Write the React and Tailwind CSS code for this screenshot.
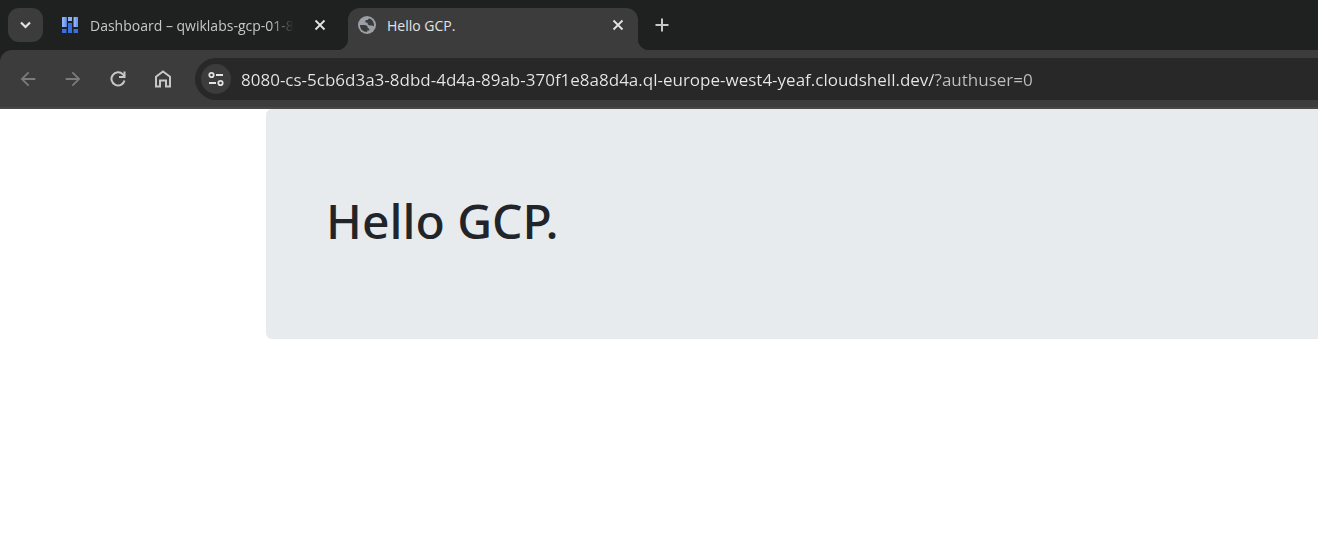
import { MdArrowBack, MdArrowForward } from "react-icons/md";

function ChevronIcon() {
  return (
    <svg className="size-[18px]" viewBox="0 0 18 18" fill="none" stroke="#e3e3e3" strokeWidth="2.2">
      <path d="M4 6.5 8.500 11 13 6.500" />
    </svg>
  );
}

function DashboardIcon() {
  return (
    <svg className="size-4 shrink-0" viewBox="0 0 16 16">
      <path fill="#8ab0f8" d="M0 0h4.500v10H0zM6 0h4v4H6zM11.500 0H16v10h-4.500z" />
      <path fill="#6d9af5" d="M2.500 0h2v10h-2zM14 0h2v10h-2z" />
      <path fill="#3a6fe0" d="M0 12h4.500v4H0zM6 6h4v10H6zM11.500 12H16v4h-4.500z" />
    </svg>
  );
}

function GlobeIcon() {
  return (
    <svg className="size-[18px] shrink-0" viewBox="0 0 18 18">
      <circle cx="9" cy="9" r="9" fill="#9aa0a6" />
      <path
        fill="#3c3c3c"
        d="M2 9h4.200c2.300 0 3.500 1 3.500 2.600 0 .6.400.8 1 .8h.6v1.500c0 .4-.3.7-.7.700H9.200v1.400C5 16.100 2 13.200 2 9zM11.600 2.400C14.300 3.500 16 6 16 9c0 .5-.1 1-.2 1.400-.6-.5-1.400-.8-2.300-.8-2.400 0-3.900-.8-3.900-2.400 0-.6-.4-.8-1-.8H7.400V5.200c0-.7.5-1.200 1.200-1.200h1.200c.2-.9.800-1.400 1.800-1.600z"
      />
    </svg>
  );
}

function CloseIcon() {
  return (
    <svg className="size-3" viewBox="0 0 12 12" fill="none" stroke="#e3e3e3" strokeWidth="1.800">
      <path d="m1.500 1.500 9 9M10.500 1.500l-9 9" />
    </svg>
  );
}

function PlusIcon() {
  return (
    <svg className="size-[14px]" viewBox="0 0 14 14" fill="none" stroke="#c7c7c7" strokeWidth="2">
      <path d="M7 .5v13M.5 7h13" />
    </svg>
  );
}

function ReloadIcon() {
  return (
    <svg className="size-4" viewBox="0 0 16 16" fill="none" stroke="#c7c7c7" strokeWidth="2">
      <path d="M14.500 9.500A6.600 6.600 0 1 1 12.900 3.400L14.700 5.200" />
      <path d="M14.500 .5v5.500H9" />
    </svg>
  );
}

function HomeIcon() {
  return (
    <svg className="size-[18px]" viewBox="0 0 18 18" fill="none" stroke="#c7c7c7" strokeWidth="2">
      <path d="M2 16.500V6.800L9 1.500l7 5.300v9.700h-4v-6H6v6z" />
    </svg>
  );
}

function TuneIcon() {
  return (
    <svg className="size-4" viewBox="0 0 16 16" fill="none" stroke="#e3e3e3" strokeWidth="1.800">
      <circle cx="3.500" cy="4" r="2.200" />
      <path d="M8 4h7M1 12h7" />
      <circle cx="12.500" cy="12" r="2.200" />
    </svg>
  );
}

function ToolButton({ label, children }) {
  return (
    <button type="button" aria-label={label} className="flex size-[35px] items-center justify-center rounded-full">
      {children}
    </button>
  );
}

export default function App() {
  return (
    <div className="min-h-screen overflow-hidden bg-white font-['Open_Sans','Noto_Sans',sans-serif]">
      <header className="bg-[#1f2120]">
        <div className="flex h-[50px] items-end pl-2">
          <button
            type="button"
            aria-label="Search tabs"
            className="mb-2 flex h-[34px] w-[35px] items-center justify-center rounded-[11px] bg-[#3c3c3c]"
          >
            <ChevronIcon />
          </button>

          <div className="ml-[7px] flex h-[42px] w-[298px] items-center pr-[22px] pb-2 pl-3">
            <DashboardIcon />
            <a
              href="#dashboard"
              className="ml-3 mask-r-from-[calc(100%-24px)] mask-r-to-100% pt-[2px] text-sm whitespace-nowrap text-[#c7c7c7]"
            >
              Dashboard – qwiklabs-gcp-01-8
            </a>
            <button type="button" aria-label="Close Dashboard tab" className="ml-auto">
              <CloseIcon />
            </button>
          </div>

          <div className="relative flex h-[42px] w-[290px] items-center rounded-t-xl bg-[#3c3c3c] pr-[14px] pb-2 pl-[10px] before:absolute before:bottom-0 before:-left-3 before:size-3 before:bg-[radial-gradient(circle_at_0_0,transparent_12px,#3c3c3c_13px)] after:absolute after:-right-3 after:bottom-0 after:size-3 after:bg-[radial-gradient(circle_at_100%_0,transparent_12px,#3c3c3c_13px)]">
            <GlobeIcon />
            <a href="#hello" className="ml-[11px] pt-[2px] text-sm text-[#e3e3e3]">
              Hello GCP.
            </a>
            <button type="button" aria-label="Close Hello GCP. tab" className="ml-auto">
              <CloseIcon />
            </button>
          </div>

          <button type="button" aria-label="New tab" className="mb-2 ml-[7px] flex size-[34px] items-center justify-center">
            <PlusIcon />
          </button>
        </div>

        <div className="flex h-[59px] items-center rounded-tl-xl border-b-2 border-[#474747] bg-[#3c3c3c] pl-[10px]">
          <nav aria-label="Browser" className="flex gap-[10px]">
            <ToolButton label="Back">
              <MdArrowBack className="size-[22px] text-[#7b7b7b]" />
            </ToolButton>
            <ToolButton label="Forward">
              <MdArrowForward className="size-[22px] text-[#7b7b7b]" />
            </ToolButton>
            <ToolButton label="Reload">
              <ReloadIcon />
            </ToolButton>
            <ToolButton label="Home">
              <HomeIcon />
            </ToolButton>
          </nav>
          <div className="ml-[15px] flex h-[42px] min-w-0 flex-1 items-center rounded-l-full bg-[#282828] pl-[6px]">
            <button
              type="button"
              aria-label="View site information"
              className="flex size-[30px] shrink-0 items-center justify-center rounded-full bg-[#3c3c3c]"
            >
              <TuneIcon />
            </button>
            <input
              type="text"
              aria-label="Address"
              defaultValue="8080-cs-5cb6d3a3-8dbd-4d4a-89ab-370f1e8a8d4a.ql-europe-west4-yeaf.cloudshell.dev/?authuser=0"
              className="ml-[10px] min-w-0 flex-1 bg-linear-to-r from-[#e8e8e8] from-[692px] to-[#c0c0c0] to-[692px] bg-clip-text pt-[2px] text-[17px] text-transparent caret-white outline-none"
            />
          </div>
        </div>
      </header>

      <main className="pl-[266px]">
        <section className="rounded-l-md bg-[#e7ebee] px-[60px] pt-[82px] pb-[88px]">
          <h1 className="font-['Noto_Sans','Open_Sans',sans-serif] text-5xl/[60px] font-medium text-[#212529]">
            Hello GCP.
          </h1>
        </section>
      </main>
    </div>
  );
}
